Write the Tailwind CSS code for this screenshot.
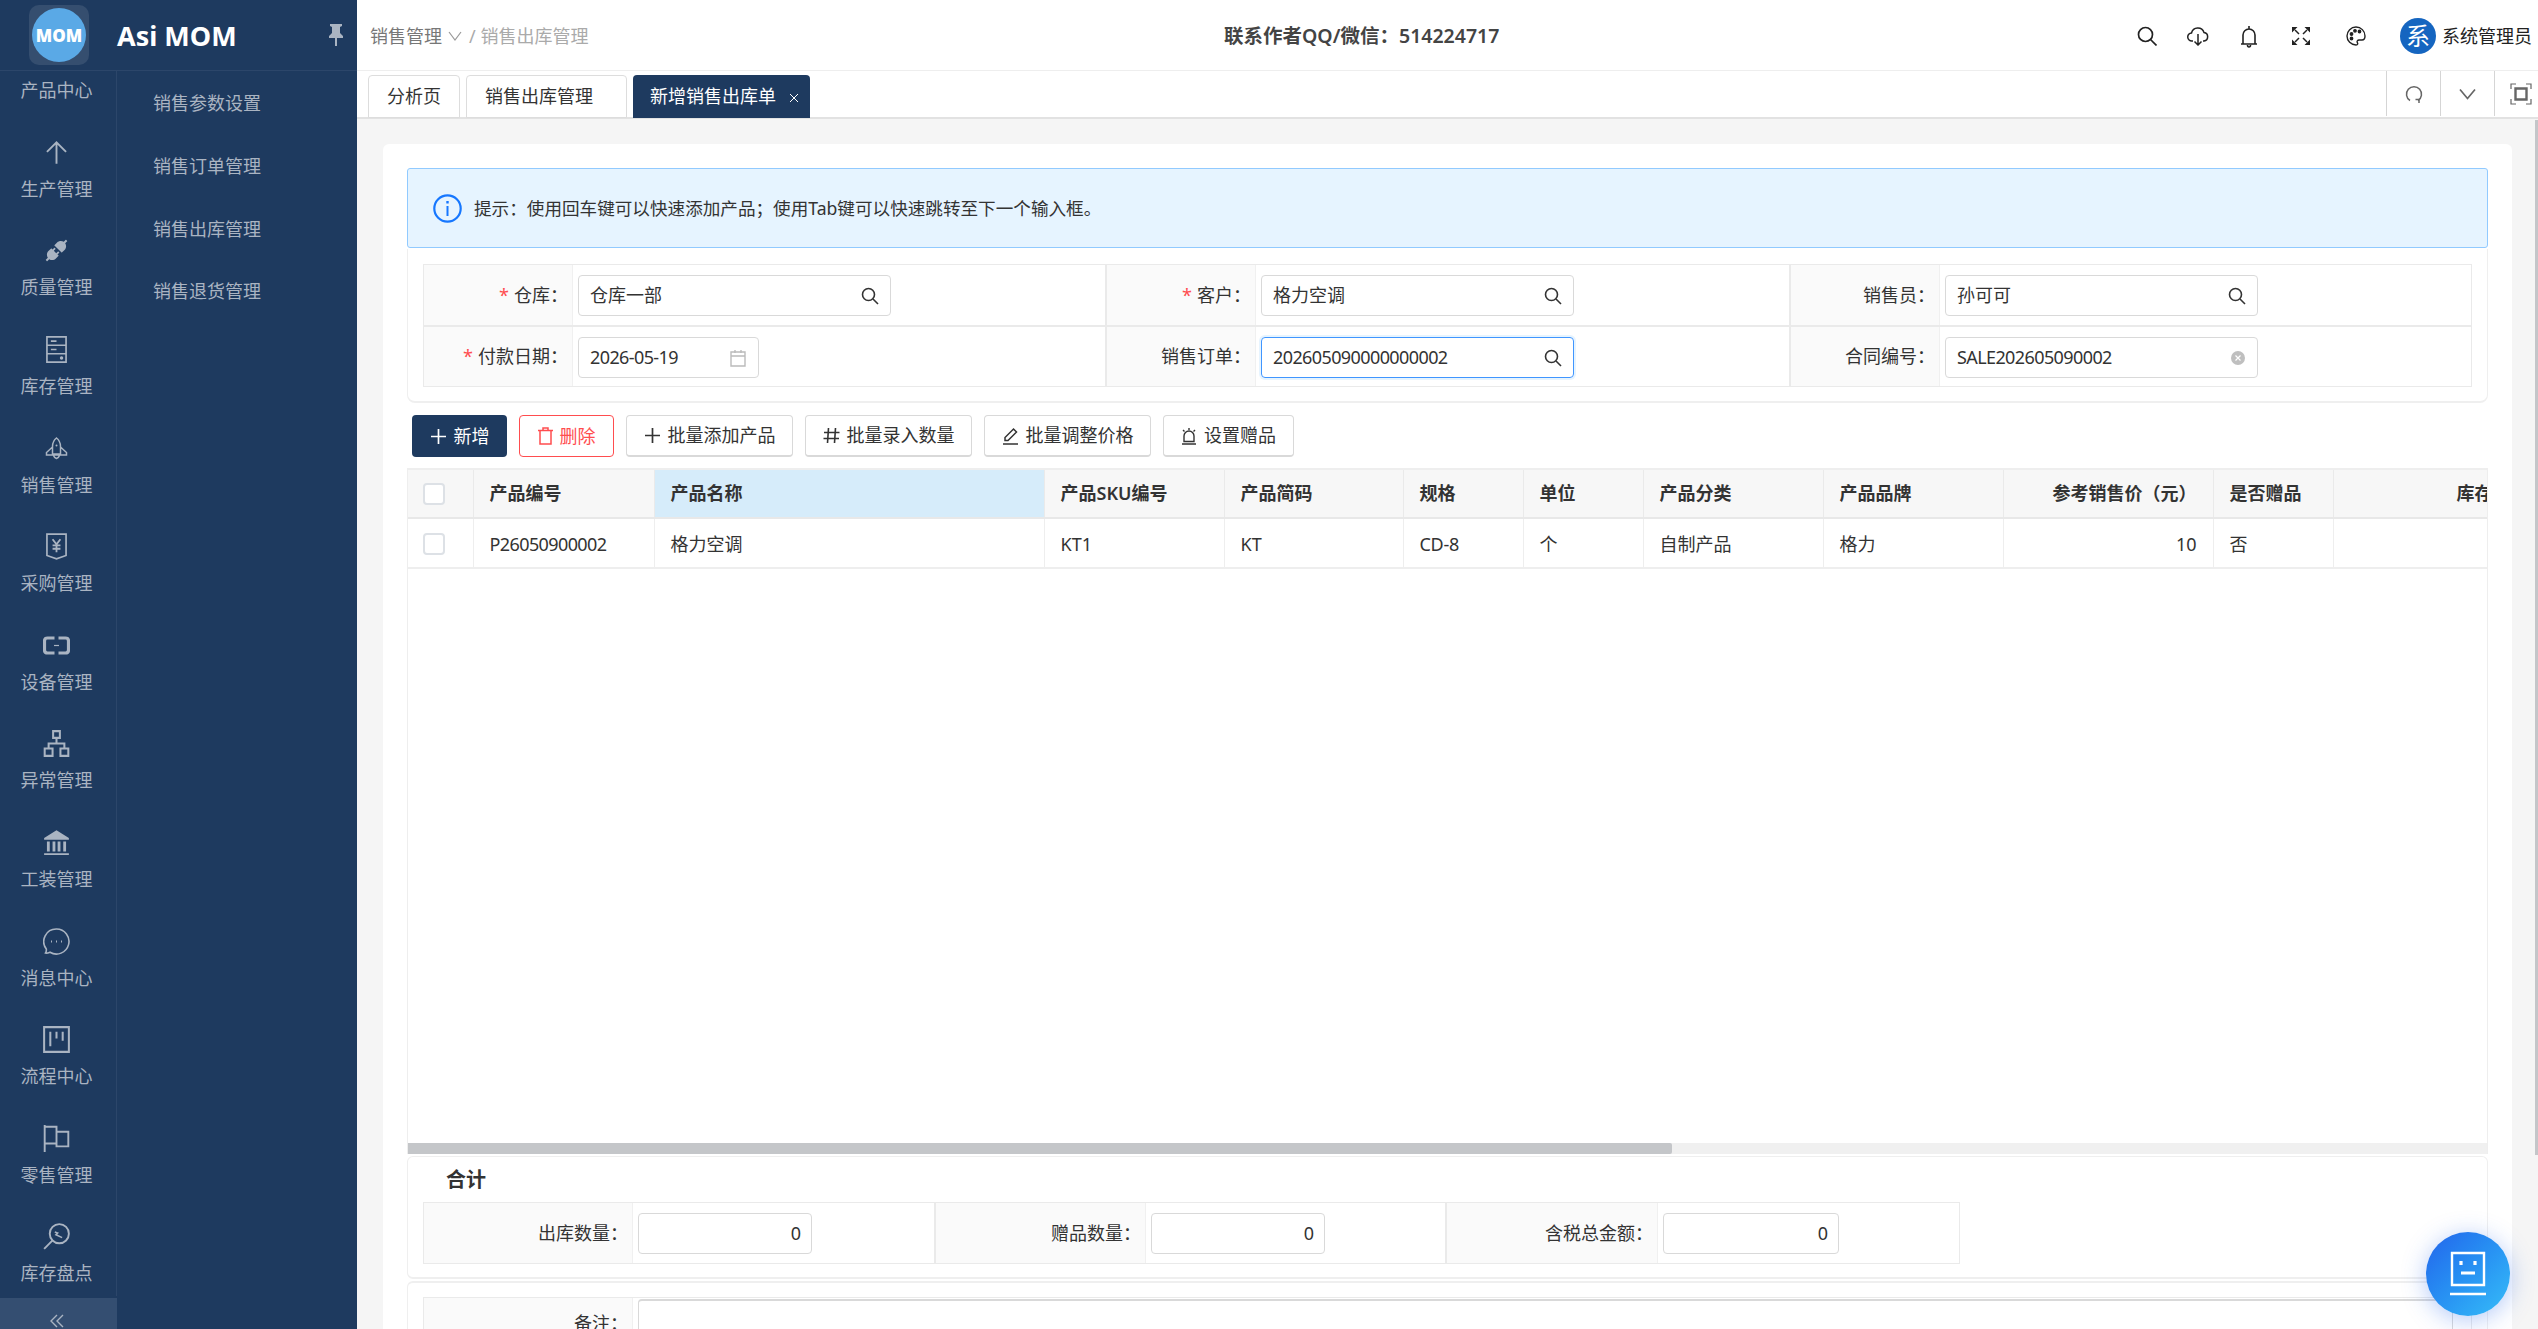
<!DOCTYPE html>
<html lang="zh-CN">
<head>
    <meta charset="UTF-8">
    <title>新增销售出库单</title>
    <script src="https://cdn.jsdelivr.net/npm/@tailwindcss/browser@4"></script>
</head>
<body class="bg-white text-[18px] text-[#333] font-['Noto_Sans','Noto_Sans_CJK_SC',sans-serif]">
<div class="relative flex h-screen overflow-hidden">

    <!-- sidebar -->
    <aside class="relative w-[357px] shrink-0 bg-[#1e3a5f] text-[#aab4c2]">
        <div class="flex h-[71px] items-center border-b border-[#2c466a]">
            <div class="ml-[29px] flex h-[60px] w-[60px] items-center justify-center rounded-[10px] bg-white/10">
                <div class="flex h-[54px] w-[54px] items-center justify-center rounded-full bg-[#5aa9e6] text-[17px] font-black leading-none text-white">MOM</div>
            </div>
            <div class="ml-[28px] text-[27px] font-bold leading-none text-white">Asi MOM</div>
            <svg class="ml-auto mr-[13px] h-[22px] w-[16px]" viewBox="0 0 16 22" fill="#aab4c2"><path d="M2 0h12v2l-2 1v6l3 3v2H9v8H7v-8H1v-2l3-3V3L2 2z"/></svg>
        </div>
        <div class="flex h-[1258px]">
            <nav class="flex h-[1225px] w-[117px] shrink-0 flex-col overflow-hidden border-r border-[#2c466a] pr-[3px]">
                <a class="-mt-[48px] flex h-[98.6px] shrink-0 flex-col items-center justify-center gap-[10px]">
                    <span class="h-[27px]"></span><span class="leading-[27px]">产品中心</span>
                </a>
                <a class="flex h-[98.6px] shrink-0 flex-col items-center justify-center gap-[10px]">
                    <svg class="h-[27px] w-[27px]" viewBox="0 0 24 24" fill="none" stroke="currentColor" stroke-width="1.7"><path d="M12 22V3M3.5 11.5 12 3l8.500 8.500"/></svg>
                    <span class="leading-[27px]">生产管理</span>
                </a>
                <a class="flex h-[98.6px] shrink-0 flex-col items-center justify-center gap-[10px]">
                    <svg class="h-[27px] w-[27px]" viewBox="0 0 1024 1024" fill="currentColor"><path d="M917.7 148.8l-42.4-42.4c-1.6-1.6-3.6-2.3-5.7-2.3s-4.1.8-5.7 2.3l-76.1 76.1a199.27 199.27 0 00-112.1-34.3c-51.2 0-102.4 19.5-141.5 58.6L432.3 308.7a8.03 8.03 0 000 11.3L704 591.7c1.6 1.6 3.6 2.3 5.7 2.3 2 0 4.1-.8 5.7-2.3l101.9-101.9c68.9-69 77-175.7 24.3-253.5l76.1-76.1c3.1-3.2 3.1-8.3 0-11.4zM578.9 546.7a8.03 8.03 0 00-11.3 0L501 613.3 410.7 523l66.7-66.7c3.1-3.1 3.1-8.2 0-11.3L441 408.6a8.03 8.03 0 00-11.3 0L363 475.3l-43-43a7.85 7.85 0 00-5.7-2.3c-2 0-4.1.8-5.7 2.3L206.8 534.2c-68.9 69-77 175.7-24.3 253.5l-76.1 76.1a8.03 8.03 0 000 11.3l42.4 42.4c1.6 1.6 3.6 2.3 5.7 2.3s4.1-.8 5.7-2.3l76.1-76.1c33.7 22.9 72.9 34.3 112.1 34.3 51.2 0 102.4-19.5 141.5-58.6l101.9-101.9c3.1-3.1 3.1-8.2 0-11.3l-43-43 66.7-66.7c3.1-3.1 3.1-8.2 0-11.3l-36.6-36.2z"/></svg>
                    <span class="leading-[27px]">质量管理</span>
                </a>
                <a class="flex h-[98.6px] shrink-0 flex-col items-center justify-center gap-[10px]">
                    <svg class="h-[27px] w-[27px]" viewBox="0 0 24 24" fill="none" stroke="currentColor" stroke-width="1.5"><path d="M3.500.8h17v22.400h-17zM3.500 8.200h17M3.500 15.800h17M7 4.500h5M7 12h5"/><circle cx="16.500" cy="19.500" r=".8" fill="currentColor"/></svg>
                    <span class="leading-[27px]">库存管理</span>
                </a>
                <a class="flex h-[98.6px] shrink-0 flex-col items-center justify-center gap-[10px]">
                    <svg class="h-[27px] w-[27px]" viewBox="0 0 27 27" fill="none" stroke="currentColor" stroke-width="1.500"><path d="M13.500 3c2.500 2 4 5 4 8.500V19h-8v-7.500c0-3.500 1.500-6.500 4-8.500zM9.500 12 3.500 17.500V20h20v-2.500L17.500 12M10.500 20.500c.5 1.500 1.500 2.500 3 3 1.500-.5 2.500-1.500 3-3"/><circle cx="13.500" cy="10.500" r="1" fill="currentColor" stroke="none"/></svg>
                    <span class="leading-[27px]">销售管理</span>
                </a>
                <a class="flex h-[98.6px] shrink-0 flex-col items-center justify-center gap-[10px]">
                    <svg class="h-[27px] w-[27px]" viewBox="0 0 24 24" fill="none" stroke="currentColor" stroke-width="1.5"><path d="M3.500 1h17v19L12 23l-8.500-3z"/><path d="M8.500 5.500 12 10l3.500-4.500M12 10v7M8.500 11h7M8.500 14h7" stroke-width="1.600"/></svg>
                    <span class="leading-[27px]">采购管理</span>
                </a>
                <a class="flex h-[98.6px] shrink-0 flex-col items-center justify-center gap-[10px]">
                    <svg class="h-[27px] w-[27px]" viewBox="0 0 27 27" fill="none" stroke="currentColor" stroke-width="3.200"><path d="M11.500 6H4.500Q1.500 6 1.500 9v9q0 3 3 3h7M15.500 6h7q3 0 3 3v9q0 3-3 3h-7"/><path d="M11 13.500h5" stroke-width="1.200"/></svg>
                    <span class="leading-[27px]">设备管理</span>
                </a>
                <a class="flex h-[98.6px] shrink-0 flex-col items-center justify-center gap-[10px]">
                    <svg class="h-[27px] w-[27px]" viewBox="0 0 24 24" fill="none" stroke="currentColor" stroke-width="1.800"><path d="M9 1h6v6H9zM1.500 16.500h7v6.500h-7zM15.500 16.500h7v6.500h-7zM12 7v5M5 16.500V12h14v4.500"/></svg>
                    <span class="leading-[27px]">异常管理</span>
                </a>
                <a class="flex h-[98.6px] shrink-0 flex-col items-center justify-center gap-[10px]">
                    <svg class="h-[27px] w-[27px]" viewBox="0 0 24 24" fill="currentColor"><path d="M12 1 23 8v1.500H1V8zM1 21.500h22V23H1zM3.500 11h2.500v9H3.500zM8.500 11H11v9H8.500zM13 11h2.500v9H13zM18 11h2.500v9H18z"/></svg>
                    <span class="leading-[27px]">工装管理</span>
                </a>
                <a class="flex h-[98.6px] shrink-0 flex-col items-center justify-center gap-[10px]">
                    <svg class="h-[27px] w-[27px]" viewBox="0 0 27 27" fill="none" stroke="currentColor" stroke-width="1.600"><path d="M13.500 1A12.500 12.500 0 1 1 7 24.200c-1.500.6-3.500 1.100-4.500.8.800-1.200 1-2.500.8-4A12.500 12.500 0 0 1 13.500 1z"/><path d="M8 13.500h1M13 13.500h1M18 13.500h1" stroke-width="1.800"/></svg>
                    <span class="leading-[27px]">消息中心</span>
                </a>
                <a class="flex h-[98.6px] shrink-0 flex-col items-center justify-center gap-[10px]">
                    <svg class="h-[27px] w-[27px]" viewBox="0 0 24 24" fill="none" stroke="currentColor" stroke-width="1.800"><path d="M1 1h22v22H1z"/><path d="M6.500 5v13M12 5v6M17.500 5v8"/></svg>
                    <span class="leading-[27px]">流程中心</span>
                </a>
                <a class="flex h-[98.6px] shrink-0 flex-col items-center justify-center gap-[10px]">
                    <svg class="h-[27px] w-[27px]" viewBox="0 0 24 24" fill="none" stroke="currentColor" stroke-width="1.700"><path d="M1.500 0v24M1.500 1.500H12v15H1.500M12 6h10.500v13H12z"/></svg>
                    <span class="leading-[27px]">零售管理</span>
                </a>
                <a class="flex h-[98.6px] shrink-0 flex-col items-center justify-center gap-[10px]">
                    <svg class="h-[27px] w-[27px]" viewBox="0 0 24 24" fill="none" stroke="currentColor" stroke-width="1.700"><circle cx="14.500" cy="9.500" r="8.500"/><path d="M8.500 15.500 1 23"/><path d="m10.500 8 2.500 1-1.500 1.500L17 13" stroke-width="1.400"/></svg>
                    <span class="leading-[27px]">库存盘点</span>
                </a>
            </nav>
            <div class="flex flex-col gap-[26.800px] pl-[36px] pt-[14px]">
                <a class="leading-[36px]">销售参数设置</a>
                <a class="leading-[36px]">销售订单管理</a>
                <a class="leading-[36px]">销售出库管理</a>
                <a class="leading-[36px]">销售退货管理</a>
            </div>
        </div>
        <div class="absolute bottom-0 left-0 flex h-[31px] w-[117px] items-end justify-center bg-[#344e71] pb-[1px] pr-[3px]">
            <svg class="h-[14px] w-[14px]" viewBox="0 0 14 14" fill="none" stroke="currentColor" stroke-width="1.400"><path d="M7 1 1 7l6 6M13 1 7 7l6 6"/></svg>
        </div>
    </aside>

    <div class="flex min-w-0 flex-1 flex-col">
        <!-- top bar -->
        <header class="relative flex h-[71px] shrink-0 items-center border-b border-[#eeeeee] pl-[13px] pt-[2px]">
            <span class="text-[#777]">销售管理</span>
            <svg class="ml-[6px] h-[10px] w-[14px]" viewBox="0 0 14 10" fill="none" stroke="#999" stroke-width="1.200"><path d="m1 1 6 8 6-8"/></svg>
            <span class="ml-[7px] text-[#aaa]">/ 销售出库管理</span>
            <span class="absolute left-[867px] text-[19.500px] font-semibold text-[#444]">联系作者QQ/微信：514224717</span>
            <div class="ml-auto flex items-center text-[#222]">
                <svg class="h-[20px] w-[20px]" viewBox="0 0 20 20" fill="none" stroke="currentColor" stroke-width="1.700"><circle cx="8.500" cy="8.500" r="7"/><path d="m13.500 13.500 6 6"/></svg>
                <svg class="ml-[30px] h-[20px] w-[22px]" viewBox="0 0 22 20" fill="none" stroke="currentColor" stroke-width="1.500"><path d="M6 15H5a4 4 0 0 1-.5-8A6.500 6.500 0 0 1 17 6.500 4.300 4.300 0 0 1 17 15h-1M11 8v11M7.500 15.500 11 19l3.500-3.500"/></svg>
                <svg class="ml-[31px] h-[24px] w-[18px]" viewBox="0 0 18 24" fill="none" stroke="currentColor" stroke-width="1.600"><path d="M1 20h16M3 20v-9a6 6 0 0 1 12 0v9M9 2v3M7.500 21a1.500 2 0 0 0 3 0"/></svg>
                <svg class="ml-[34px] h-[18px] w-[18px]" viewBox="0 0 18 18" fill="currentColor"><path d="M0 0h5.500L0 5.500zM18 0h-5.500L18 5.500zM0 18v-5.500L5.500 18zM18 18v-5.500L12.500 18z"/><path d="m3 3 4 4M15 3l-4 4M3 15l4-4M15 15l-4-4" stroke="currentColor" stroke-width="1.500"/></svg>
                <svg class="ml-[36px] h-[20px] w-[20px]" viewBox="0 0 20 20" fill="none" stroke="currentColor" stroke-width="1.400"><path d="M10 1a9 9 0 1 0 0 18c2 0 2-1.500 1.300-2.500-.7-1.200.2-2.500 1.700-2.500h3c2 0 3-1.500 3-4 0-5-4-9-9-9z"/><circle cx="5.500" cy="8" r="1.200" fill="currentColor"/><circle cx="9" cy="4.800" r="1.200" fill="currentColor"/><circle cx="13.500" cy="5.500" r="1.200" fill="currentColor"/><circle cx="5.500" cy="12.500" r="1.200" fill="currentColor"/></svg>
                <div class="ml-[34px] flex h-[36px] w-[36px] items-center justify-center rounded-full bg-[#1565c0] text-[24px] leading-none text-white">系</div>
                <span class="ml-[6px] mr-[6px]">系统管理员</span>
            </div>
        </header>

        <!-- tabs -->
        <div class="flex h-[48px] shrink-0 border-b-2 border-[#e2e2e2]">
            <div class="flex flex-1 items-start gap-[6px] pl-[11px] pt-[4px]">
                <div class="flex h-[43px] w-[92px] items-center justify-center rounded-t-[4px] border border-[#dddddd]">分析页</div>
                <div class="flex h-[43px] w-[161px] items-center rounded-t-[4px] border border-[#dddddd] pl-[18px]">销售出库管理</div>
                <div class="flex h-[43px] w-[177px] items-center rounded-t-[4px] bg-[#1e3a5f] pl-[17px] text-white">
                    新增销售出库单
                    <svg class="ml-[13px] mt-[3px] h-[10px] w-[10px]" viewBox="0 0 10 10" fill="none" stroke="currentColor" stroke-width="1"><path d="m1 1 8 8M9 1 1 9"/></svg>
                </div>
            </div>
            <div class="flex h-[45px] w-[54px] items-center justify-center border-l border-[#d5d5d5] pt-[1px] text-[#666]">
                <svg class="h-[18px] w-[18px]" viewBox="0 0 18 18" fill="none" stroke="currentColor" stroke-width="1.500"><path d="M5 15.500A7.500 7.500 0 1 1 13 15.500"/><path d="M10.500 14.500h3.500v3.500" fill="none"/></svg>
            </div>
            <div class="flex h-[45px] w-[54px] items-center justify-center border-l border-[#d5d5d5] pt-[1px] text-[#666]">
                <svg class="h-[12px] w-[17px]" viewBox="0 0 17 12" fill="none" stroke="currentColor" stroke-width="1.700"><path d="m1 1.500 7.500 9 7.500-9"/></svg>
            </div>
            <div class="flex h-[45px] w-[44px] items-center justify-center border-l border-[#d5d5d5] pl-[9px] pt-[1px] text-[#666]">
                <svg class="h-[22px] w-[22px] shrink-0" viewBox="0 0 22 22" fill="none" stroke="currentColor"><path d="M1 6V1h5M16 1h5v5M21 16v5h-5M6 21H1v-5" stroke-width="1.200"/><path d="M5.500 5.500h11v11h-11z" stroke-width="2.400"/></svg>
            </div>
        </div>

        <!-- content -->
        <main class="min-h-0 flex-1 overflow-hidden bg-[#f5f5f5] pl-[26px] pr-[26px] pt-[25px]">
            <div class="rounded-[6px] bg-white px-[24px] pb-[40px] pt-[24px]">
                <div class="flex h-[80px] items-center rounded-[3px] border border-[#91caff] bg-[#e6f4ff] pl-[25px]">
                    <svg class="h-[29px] w-[29px]" viewBox="0 0 29 29" fill="none" stroke="#1677ff" stroke-width="2.200"><circle cx="14.500" cy="14.500" r="13.200"/><path d="M14.500 12v10" stroke-width="2"/><path d="M14.500 7v2.500" stroke-width="2.400"/></svg>
                    <span class="ml-[12px] text-[17.600px]">提示：使用回车键可以快速添加产品；使用Tab键可以快速跳转至下一个输入框。</span>
                </div>

                <!-- form -->
                <div class="mt-[1px] rounded-b-[8px] border-b-2 border-l border-r border-[#efefef] px-[15px] pb-[14px] pt-[15px]">
                    <div class="border border-[#eaeaea]">
                        <div class="grid h-[62px] grid-cols-[683px_684px_1fr] border-b-2 border-[#eaeaea]">
                            <div class="flex border-r-2 border-[#eaeaea]">
                                <div class="flex w-[149px] shrink-0 items-center justify-end border-r border-[#f0f0f0] bg-[#fafafa] pr-[4px]"><span class="mr-[5px] text-[#ff4d4f]">*</span>仓库：</div>
                                <div class="ml-[5px] mt-[10px] flex h-[41px] w-[313px] items-center justify-between rounded-[4px] border border-[#d9d9d9] pl-[11px] pr-[11px]">仓库一部
                                    <svg class="h-[18px] w-[18px]" viewBox="0 0 18 18" fill="none" stroke="#333" stroke-width="1.600"><circle cx="7.500" cy="7.500" r="6"/><path d="m12 12 5 5"/></svg>
                                </div>
                            </div>
                            <div class="flex border-r-2 border-[#eaeaea]">
                                <div class="flex w-[149px] shrink-0 items-center justify-end border-r border-[#f0f0f0] bg-[#fafafa] pr-[4px]"><span class="mr-[5px] text-[#ff4d4f]">*</span>客户：</div>
                                <div class="ml-[5px] mt-[10px] flex h-[41px] w-[313px] items-center justify-between rounded-[4px] border border-[#d9d9d9] pl-[11px] pr-[11px]">格力空调
                                    <svg class="h-[18px] w-[18px]" viewBox="0 0 18 18" fill="none" stroke="#333" stroke-width="1.600"><circle cx="7.500" cy="7.500" r="6"/><path d="m12 12 5 5"/></svg>
                                </div>
                            </div>
                            <div class="flex">
                                <div class="flex w-[149px] shrink-0 items-center justify-end border-r border-[#f0f0f0] bg-[#fafafa] pr-[4px]">销售员：</div>
                                <div class="ml-[5px] mt-[10px] flex h-[41px] w-[313px] items-center justify-between rounded-[4px] border border-[#d9d9d9] pl-[11px] pr-[11px]">孙可可
                                    <svg class="h-[18px] w-[18px]" viewBox="0 0 18 18" fill="none" stroke="#333" stroke-width="1.600"><circle cx="7.500" cy="7.500" r="6"/><path d="m12 12 5 5"/></svg>
                                </div>
                            </div>
                        </div>
                        <div class="grid h-[59px] grid-cols-[683px_684px_1fr]">
                            <div class="flex border-r-2 border-[#eaeaea]">
                                <div class="flex w-[149px] shrink-0 items-center justify-end border-r border-[#f0f0f0] bg-[#fafafa] pr-[4px]"><span class="mr-[5px] text-[#ff4d4f]">*</span>付款日期：</div>
                                <div class="ml-[5px] mt-[10px] flex h-[41px] w-[181px] items-center justify-between rounded-[4px] border border-[#d9d9d9] pl-[11px] pr-[11px] tracking-[-0.6px]">2026-05-19
                                    <svg class="h-[18px] w-[18px]" viewBox="0 0 18 18" fill="none" stroke="#bbb" stroke-width="1.400"><path d="M2 3h14v14H2zM2 7h14M6 1v3M12 1v3"/></svg>
                                </div>
                            </div>
                            <div class="flex border-r-2 border-[#eaeaea]">
                                <div class="flex w-[149px] shrink-0 items-center justify-end border-r border-[#f0f0f0] bg-[#fafafa] pr-[4px]">销售订单：</div>
                                <div class="ml-[5px] mt-[10px] flex h-[41px] w-[313px] items-center justify-between rounded-[4px] border border-[#4096ff] pl-[11px] pr-[11px] tracking-[-0.6px] shadow-[0_0_0_2px_#e6f4ff]">202605090000000002
                                    <svg class="h-[18px] w-[18px]" viewBox="0 0 18 18" fill="none" stroke="#333" stroke-width="1.600"><circle cx="7.500" cy="7.500" r="6"/><path d="m12 12 5 5"/></svg>
                                </div>
                            </div>
                            <div class="flex">
                                <div class="flex w-[149px] shrink-0 items-center justify-end border-r border-[#f0f0f0] bg-[#fafafa] pr-[4px]">合同编号：</div>
                                <div class="ml-[5px] mt-[10px] flex h-[41px] w-[313px] items-center justify-between rounded-[4px] border border-[#d9d9d9] pl-[11px] pr-[11px] tracking-[-0.6px]">SALE202605090002
                                    <svg class="h-[16px] w-[16px]" viewBox="0 0 16 16"><circle cx="8" cy="8" r="7" fill="#bfbfbf"/><path d="m5.500 5.500 5 5M10.500 5.500l-5 5" stroke="#fff" stroke-width="1.200"/></svg>
                                </div>
                            </div>
                        </div>
                    </div>
                </div>

                <!-- toolbar -->
                <div class="ml-[5px] mt-[12px] flex gap-[12px] text-[#333]">
                    <button class="flex h-[42px] w-[95px] items-center justify-center gap-[7px] rounded-[4px] bg-[#1e3a5f] text-white">
                        <svg class="h-[17px] w-[17px]" viewBox="0 0 17 17" fill="none" stroke="currentColor" stroke-width="1.700"><path d="M8.500 1v15M1 8.500h15"/></svg>新增
                    </button>
                    <button class="flex h-[42px] w-[95px] items-center justify-center gap-[7px] rounded-[4px] border border-[#ff4d4f] text-[#ff4d4f]">
                        <svg class="h-[18px] w-[15px]" viewBox="0 0 15 18" fill="none" stroke="currentColor" stroke-width="1.500"><path d="M0 3.500h15M2 3.500V17h11V3.500M5 3.500V1h5v2.500"/></svg>删除
                    </button>
                    <button class="flex h-[42px] w-[167px] items-center justify-center gap-[7px] rounded-[4px] border border-[#d9d9d9] border-b-2">
                        <svg class="h-[17px] w-[17px]" viewBox="0 0 17 17" fill="none" stroke="currentColor" stroke-width="1.700"><path d="M8.500 1v15M1 8.500h15"/></svg>批量添加产品
                    </button>
                    <button class="flex h-[42px] w-[167px] items-center justify-center gap-[7px] rounded-[4px] border border-[#d9d9d9] border-b-2">
                        <svg class="h-[17px] w-[17px]" viewBox="0 0 17 17" fill="none" stroke="currentColor" stroke-width="1.600"><path d="M5.500 1 4.500 16M12.500 1l-1 15M1 5.500h15.500M.5 11.500H16"/></svg>批量录入数量
                    </button>
                    <button class="flex h-[42px] w-[167px] items-center justify-center gap-[7px] rounded-[4px] border border-[#d9d9d9] border-b-2">
                        <svg class="h-[18px] w-[17px]" viewBox="0 0 17 18" fill="none" stroke="currentColor" stroke-width="1.500"><path d="M1 17h15M3 13.500v-3L11.500 2l3 3L6 13.500z"/></svg>批量调整价格
                    </button>
                    <button class="flex h-[42px] w-[131px] items-center justify-center gap-[7px] rounded-[4px] border border-[#d9d9d9] border-b-2">
                        <svg class="h-[18px] w-[16px]" viewBox="0 0 16 18" fill="none" stroke="currentColor" stroke-width="1.400"><path d="M1 17h14M3 14.500V9a5 5 0 0 1 10 0v5.500zM8 1v2M2 3l1.500 1.500M14 3l-1.500 1.500"/></svg>设置赠品
                    </button>
                </div>

                <!-- detail table -->
                <div class="mt-[11px] h-[686px] overflow-hidden border-t-2 border-l border-r border-[#eeeeee]">
                    <div class="h-[673px] overflow-hidden">
                        <table class="w-[2141px] table-fixed border-collapse">
                            <colgroup>
                                <col class="w-[65px]"><col class="w-[181px]"><col class="w-[390px]"><col class="w-[180px]"><col class="w-[179px]"><col class="w-[120px]"><col class="w-[120px]"><col class="w-[180px]"><col class="w-[180px]"><col class="w-[210px]"><col class="w-[120px]"><col class="w-[216px]">
                            </colgroup>
                            <thead>
                                <tr class="h-[48px] border-b-2 border-[#e8e8e8] bg-[#f7f7f7] text-left font-semibold [&>th]:border-r [&>th]:border-[#eaeaea] [&>th]:pl-[16px] [&>th]:font-semibold [&>th]:text-[#333]">
                                    <th class="!pl-[15px]"><div class="h-[22px] w-[22px] rounded-[4px] border-2 border-[#dde1e6] bg-white"></div></th>
                                    <th>产品编号</th>
                                    <th class="bg-[#d6ecfa]">产品名称</th>
                                    <th>产品SKU编号</th>
                                    <th>产品简码</th>
                                    <th>规格</th>
                                    <th>单位</th>
                                    <th>产品分类</th>
                                    <th>产品品牌</th>
                                    <th class="pr-[16px] text-right">参考销售价（元）</th>
                                    <th>是否赠品</th>
                                    <th class="pr-[20px] text-right">库存数量</th>
                                </tr>
                            </thead>
                            <tbody>
                                <tr class="h-[50px] border-b-2 border-[#eeeeee] [&>td]:border-r [&>td]:border-[#eeeeee] [&>td]:pl-[16px] [&>td]:pt-[2px]">
                                    <td class="!pl-[15px]"><div class="h-[22px] w-[22px] rounded-[4px] border-2 border-[#dde1e6] bg-white"></div></td>
                                    <td class="tracking-[-0.6px]">P26050900002</td>
                                    <td>格力空调</td>
                                    <td>KT1</td>
                                    <td>KT</td>
                                    <td class="tracking-[-0.3px]">CD-8</td>
                                    <td>个</td>
                                    <td>自制产品</td>
                                    <td>格力</td>
                                    <td class="pr-[16px] text-right">10</td>
                                    <td>否</td>
                                    <td></td>
                                </tr>
                            </tbody>
                        </table>
                    </div>
                    <div class="h-[11px] bg-[#f0f0f0]">
                        <div class="h-full w-[1264px] rounded-r-[2px] bg-[#c4c6c9]"></div>
                    </div>
                </div>

                <!-- totals -->
                <div class="mt-[2px] h-[123px] rounded-[6px] border border-[#efefef] border-b-2 px-[15px]">
                    <div class="flex h-[45px] items-center pl-[23px] text-[20px] font-semibold leading-none">合计</div>
                    <div class="grid h-[62px] w-[1537px] grid-cols-[512px_511px_514px] border border-[#eaeaea]">
                        <div class="flex border-r-2 border-[#eaeaea]">
                            <div class="flex w-[209px] items-center justify-end border-r border-[#f0f0f0] bg-[#fafafa] pr-[4px]">出库数量：</div>
                            <div class="ml-[5px] mt-[10px] flex h-[41px] w-[174px] items-center justify-end rounded-[4px] border border-[#d9d9d9] pr-[10px]">0</div>
                        </div>
                        <div class="flex border-r-2 border-[#eaeaea]">
                            <div class="flex w-[210px] items-center justify-end border-r border-[#f0f0f0] bg-[#fafafa] pr-[4px]">赠品数量：</div>
                            <div class="ml-[5px] mt-[10px] flex h-[41px] w-[174px] items-center justify-end rounded-[4px] border border-[#d9d9d9] pr-[10px]">0</div>
                        </div>
                        <div class="flex">
                            <div class="flex w-[211px] items-center justify-end border-r border-[#f0f0f0] bg-[#fafafa] pr-[4px]">含税总金额：</div>
                            <div class="ml-[5px] mt-[10px] flex h-[41px] w-[176px] items-center justify-end rounded-[4px] border border-[#d9d9d9] pr-[10px]">0</div>
                        </div>
                    </div>
                </div>

                <!-- remark -->
                <div class="mt-[2px] rounded-[6px] border-t-2 border-l border-r border-[#efefef] px-[15px] pt-[14px]">
                    <div class="flex h-[100px] border border-[#eaeaea]">
                        <div class="w-[209px] shrink-0 border-r border-[#f0f0f0] bg-[#fafafa] pr-[4px] pt-[12px] text-right leading-[27px]">备注：</div>
                        <div class="ml-[5px] mt-[1px] mr-[18px] flex-1 rounded-[4px] border border-t-2 border-[#d9d9d9]"></div>
                    </div>
                </div>
            </div>
        </main>
    </div>

    <!-- floating helper -->
    <div class="absolute left-[2426px] top-[1232px] flex h-[84px] w-[84px] items-center justify-center rounded-full bg-gradient-to-br from-[#2563eb] to-[#38bdf8] shadow-[0_4px_24px_rgba(37,99,235,0.35)]">
        <svg class="h-[46px] w-[36px]" viewBox="0 0 36 46" fill="none" stroke="#fff" stroke-width="2.400"><path d="M2 2h32v32H2zM0 43h36" /><path d="M11 10v4M25 10v4M11 22h14" stroke-width="3.200"/></svg>
    </div>
    <!-- page scrollbar -->
    <div class="absolute right-0 top-[120px] h-[1035px] w-[3px] bg-[#c4c6c9]"></div>
</div>
</body>
</html>
